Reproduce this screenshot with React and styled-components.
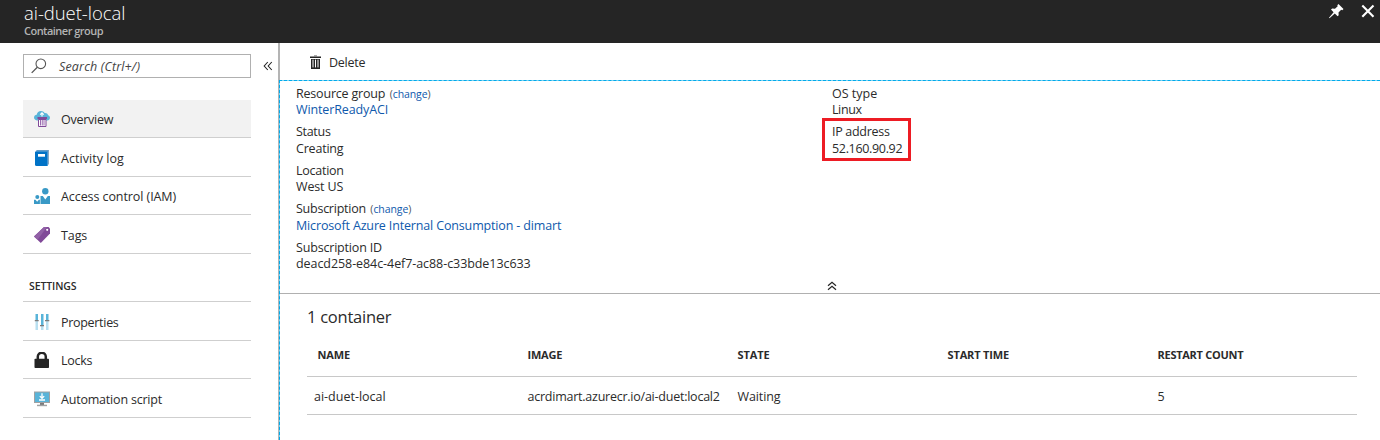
import React from 'react';
import styled, { createGlobalStyle } from 'styled-components';

const GlobalStyle = createGlobalStyle`
  * { box-sizing: border-box; }
  body {
    margin: 0;
    background: #fff;
    color: #2b2b2b;
    font-family: "Open Sans", "Noto Sans", sans-serif;
    font-size: 12.5px;
    overflow: hidden;
  }
`;

const Page = styled.div`
  display: flex;
  flex-direction: column;
  width: 1380px;
  height: 440px;
  overflow: hidden;
`;

const Text = styled.span`
  letter-spacing: ${(p) => p.$ls || 0}px;
  white-space: nowrap;
`;

const Header = styled.header`
  display: flex;
  justify-content: space-between;
  flex: none;
  height: 43px;
  padding: 2px 5px 0 24px;
  background: #252525;
`;

const Title = styled.h1`
  margin: 0;
  font-size: 18.5px;
  line-height: 21px;
  font-weight: 300;
  letter-spacing: -0.05px;
  color: #fff;
`;

const Subtitle = styled.div`
  font-size: 11px;
  line-height: 16px;
  font-weight: 600;
  letter-spacing: -0.52px;
  color: #b4b4b4;
`;

const WindowActions = styled.div`
  display: flex;
  gap: 15px;
  padding-top: 1px;
  svg { display: block; }
`;

const Body = styled.div`
  display: flex;
  flex: 1;
  min-height: 0;
`;

const Sidebar = styled.aside`
  width: 278px;
  flex: none;
  padding: 11px 0 0 23px;
`;

const SearchRow = styled.div`
  display: flex;
  align-items: center;
  gap: 12px;
`;

const SearchBox = styled.div`
  display: flex;
  align-items: center;
  gap: 12px;
  width: 228px;
  height: 24px;
  padding-left: 7px;
  border: 1px solid #b0b0b0;
  font-style: italic;
  color: #444;
`;

const Menu = styled.nav`
  width: 228px;
  margin-top: ${(p) => p.$top}px;
  border-top: ${(p) => (p.$ruled ? '1px solid #cfcfcf' : 'none')};
`;

const MenuItem = styled.a`
  display: flex;
  align-items: center;
  gap: 11px;
  height: 38.5px;
  padding: 3.2px 0 0 11px;
  border-bottom: 1px solid #cfcfcf;
  background: ${(p) => (p.$active ? '#f2f2f2' : 'transparent')};
  svg { flex: none; display: block; }
`;

const MenuHeading = styled.h2`
  margin: 25px 0 0 6px;
  font-size: 10.5px;
  line-height: 15px;
  font-weight: 600;
  letter-spacing: -0.1px;
`;

const Main = styled.main`
  flex: 1;
  min-width: 0;
  display: flex;
  flex-direction: column;
  border-left: 1px solid #b4b4b4;
`;

const Toolbar = styled.div`
  display: flex;
  align-items: center;
  gap: 7px;
  height: 37px;
  flex: none;
  padding: 1px 0 0 29px;
  border-left: 1px solid #b4b4b4;
`;

const Content = styled.div`
  flex: 1;
  border-top: 1px dashed #00abec;
  border-left: 1px dashed #00abec;
  background: linear-gradient(#7fd3f2, #7fd3f2) top / 100% 1px no-repeat border-box,
    linear-gradient(#7fd3f2, #7fd3f2) left / 1px 100% no-repeat border-box;
`;

const Essentials = styled.section`
  display: flex;
  position: relative;
  height: 213px;
  padding: 4.6px 0 0 16px;
  border-bottom: 1px solid #b0b0b0;
`;

const Column = styled.dl`
  width: 536px;
  margin: 0;
`;

const Field = styled.div`
  width: max-content;
  height: 38.5px;
  line-height: 16.7px;
  dt, dd { margin: 0; height: 16.7px; }
`;

const Highlight = styled.div`
  position: absolute;
  left: 542px;
  top: 37px;
  width: 89px;
  height: 43px;
  border: 3px solid #ed1c24;
`;

const Collapse = styled.div`
  position: absolute;
  left: 547px;
  top: 200px;
  svg { display: block; }
`;

const Link = styled.a`
  color: #0f59ac;
  letter-spacing: ${(p) => p.$ls || 0}px;
`;

const Change = styled.span`
  margin-left: 4.5px;
  font-size: 10.5px;
  color: #555;
`;

const TableSection = styled.section`
  padding: 11px 23px 0 27px;
`;

const SectionTitle = styled.h2`
  margin: 0;
  font-size: 16.5px;
  line-height: 24px;
  font-weight: 400;
  letter-spacing: -0.25px;
`;

const Row = styled.div`
  display: grid;
  grid-template-columns: 213.5px 210px 210px 210px 1fr;
  align-items: center;
  height: ${(p) => (p.$head ? 48 : 38)}px;
  padding: ${(p) => (p.$head ? '4px 0 0 7px' : '2px 0 0 7px')};
  border-bottom: 1px solid #c8c8c8;
  font-size: ${(p) => (p.$head ? 11 : 12.5)}px;
  font-weight: ${(p) => (p.$head ? 700 : 400)};
`;

const HeadCell = styled.span`
  padding-left: ${(p) => (p.$first ? 3.5 : 0)}px;
  letter-spacing: ${(p) => p.$ls || 0}px;
`;

const TrashBin = ({ body, lid }) => (
  <g>
    <path d="M5 0h3v1.4H5z" fill={lid} />
    <path d="M1 1.4h11v1.7H1zM2 4h9v10H2z" fill={body} />
    <path d="M4 4.6v7.8M6.5 4.6v7.8M9 4.6v7.8" stroke="#fff" strokeWidth="1" />
  </g>
);

const icons = {
  overview: (
    <>
      <path d="M3.5 9.500C1.5 9.500 0 8.300 0 6.600c0-1.600 1.200-2.700 2.700-2.800C3 1.500 4.800 0 7 0c1.600 0 2.900.7 3.700 2C13 1.900 14 3 14 4.300c1.200.3 2 1.200 2 2.500 0 1.600-1.200 2.700-2.800 2.700z" fill="#59b4d9" />
      <path d="M8 5.500V2M6.200 3.600L8 1.900l1.800 1.700" stroke="#fff" strokeWidth="1.200" fill="none" />
      <path d="M3.500 6h9.500v2H3.500z" fill="#804998" />
      <path d="M4.500 8.500h7.500v7H4.500z" fill="#fff" stroke="#804998" />
      <path d="M6.500 9v5.500M8.250 9v5.500M10 9v5.500" stroke="#9b6bb0" strokeWidth="1" />
    </>
  ),
  log: (
    <>
      <path d="M3 0h12v14.500h-1.300V1.500H1z" fill="#8aa9c4" />
      <path d="M1 2h12.700v14H2.500A1.500 1.500 0 0 1 1 14.500z" fill="#0072c6" />
      <path d="M1 2L3 .5h11.500L13.700 2z" fill="#3c8fcd" />
      <path d="M4 4h7v2.700H4z" fill="#fff" />
    </>
  ),
  people: (
    <>
      <circle cx="11.300" cy="3.300" r="3.200" fill="#3999c6" />
      <path d="M6.500 8h2.300l2.500 3.500L13.800 8H16v8H6.500z" fill="#3999c6" />
      <circle cx="3.300" cy="9" r="2" fill="#3999c6" />
      <path d="M0 11.800h1.500l1.700 2 1.700-2h1v4.200H0z" fill="#3999c6" />
    </>
  ),
  tag: (
    <>
      <path d="M10 0h4.500L16 1.500v5L6.800 16 0 9.500z" fill="#804998" />
      <path d="M10 0h3L3.500 12.800 0 9.500z" fill="#9160a6" />
      <circle cx="13.200" cy="2.800" r="1.100" fill="#fff" />
    </>
  ),
  sliders: (
    <>
      <path d="M1.500 6h2.500v10H1.500zM7 11h2.500v5H7zM12 6h2.500v10H12z" fill="#b8dff0" />
      <path d="M1.500 0h2.500v6H1.500zM7 0h2.500v11H7zM12 0h2.500v6H12z" fill="#59b4d9" />
      <path d="M.8 6.700h3.900M6 11.700h4M11 6.700h4.300" stroke="#7a7a7a" strokeWidth="1.200" />
    </>
  ),
  lock: (
    <>
      <path d="M3.800 8V4.700a4 4 0 0 1 8 0V8" fill="none" stroke="#252525" strokeWidth="2.500" />
      <rect x=".5" y="6.800" width="14.500" height="9.200" rx=".8" fill="#252525" />
    </>
  ),
  monitor: (
    <>
      <path d="M0 .5h16V12H0z" fill="#a0a1a2" />
      <path d="M1 1.500h14V11H1z" fill="#59b4d9" />
      <path d="M6 12h4v2H6z" fill="#7a7a7a" />
      <path d="M3 13.700h10v1.500H3z" fill="#a0a1a2" />
      <path d="M8 2.300V7M5.800 5.100L8 7.300l2.200-2.200M5 9h6" stroke="#fff" strokeWidth="1.300" fill="none" />
    </>
  ),
};

const Icon = ({ name }) => (
  <svg width="16" height="17" viewBox="0 0 16 17">{icons[name]}</svg>
);

const primary = [
  ['overview', 'Overview', -0.25],
  ['log', 'Activity log', 0.05],
  ['people', 'Access control (IAM)', -0.08],
  ['tag', 'Tags', -0.1],
];
const settings = [
  ['sliders', 'Properties', -0.3],
  ['lock', 'Locks', -0.25],
  ['monitor', 'Automation script', -0.2],
];

const MenuItems = ({ items, active }) =>
  items.map(([icon, label, ls]) => (
    <MenuItem key={label} $active={label === active}>
      <Icon name={icon} />
      <Text $ls={ls}>{label}</Text>
    </MenuItem>
  ));

const left = [
  { label: 'Resource group', ls: -0.2, value: 'WinterReadyACI', vls: -0.12, link: true, change: true },
  { label: 'Status', ls: -0.3, value: 'Creating', vls: -0.2 },
  { label: 'Location', ls: -0.25, value: 'West US', vls: -0.15 },
  { label: 'Subscription', ls: -0.25, value: 'Microsoft Azure Internal Consumption - dimart', vls: -0.15, link: true, change: true },
  { label: 'Subscription ID', ls: -0.18, value: 'deacd258-e84c-4ef7-ac88-c33bde13c633', vls: -0.07 },
];
const right = [
  { label: 'OS type', ls: 0, value: 'Linux', vls: -0.4 },
  { label: 'IP address', ls: -0.3, value: '52.160.90.92', vls: -0.33 },
];

const Fields = ({ items }) => (
  <Column>
    {items.map((f) => (
      <Field key={f.label}>
        <dt>
          <Text $ls={f.ls}>{f.label}</Text>
          {f.change && <Change>(<Link $ls={-0.1}>change</Link>)</Change>}
        </dt>
        <dd>{f.link ? <Link $ls={f.vls}>{f.value}</Link> : <Text $ls={f.vls}>{f.value}</Text>}</dd>
      </Field>
    ))}
  </Column>
);

export default function App() {
  return (
    <Page>
      <GlobalStyle />
      <Header>
        <div>
          <Title>ai-duet-local</Title>
          <Subtitle>Container group</Subtitle>
        </div>
        <WindowActions>
          <svg width="17" height="17" viewBox="0 0 17 17">
            <path d="M9.500 1L14.500 6 13.300 7.200 12.200 6.800 9.500 9.500 9.700 12.300 8.600 13.300 5.800 10.400 .5 15.200 0 14.800 4.600 9.200 2 6.500 3.200 5.500 6 5.700 8.700 3.200 8.300 2.200z" fill="#fff" />
          </svg>
          <svg width="14" height="17" viewBox="0 0 14 17">
            <path d="M1.300 2.500l11.200 11.200M12.500 2.500L1.300 13.700" stroke="#fff" strokeWidth="2.100" />
          </svg>
        </WindowActions>
      </Header>
      <Body>
        <Sidebar>
          <SearchRow>
            <SearchBox>
              <svg width="16" height="16" viewBox="0 0 16 16">
                <circle cx="9.800" cy="5.800" r="4.800" fill="none" stroke="#555" strokeWidth="1.100" />
                <path d="M6.300 9.300L.7 14.900" stroke="#555" strokeWidth="1.300" />
              </svg>
              <Text $ls={0.15}>Search (Ctrl+/)</Text>
            </SearchBox>
            <svg width="10" height="10" viewBox="0 0 10 10">
              <path d="M4.800 1L1.200 5l3.600 4M8.800 1L5.200 5l3.600 4" fill="none" stroke="#252525" strokeWidth="1.100" />
            </svg>
          </SearchRow>
          <Menu $top={21.5}>
            <MenuItems items={primary} active="Overview" />
          </Menu>
          <MenuHeading>SETTINGS</MenuHeading>
          <Menu $top={7.5} $ruled>
            <MenuItems items={settings} />
          </Menu>
        </Sidebar>
        <Main>
          <Toolbar>
            <svg width="13" height="15" viewBox="0 0 13 15">
              <TrashBin body="#252525" lid="#aaa" />
            </svg>
            <Text $ls={-0.25}>Delete</Text>
          </Toolbar>
          <Content>
            <Essentials>
              <Fields items={left} />
              <Fields items={right} />
              <Highlight />
              <Collapse>
                <svg width="10" height="10" viewBox="0 0 10 10">
                  <path d="M1 4.800l4-3.600 4 3.600M1 8.800l4-3.600 4 3.600" fill="none" stroke="#252525" strokeWidth="1.200" />
                </svg>
              </Collapse>
            </Essentials>
            <TableSection>
              <SectionTitle>1 container</SectionTitle>
              <Row $head>
                <HeadCell $first $ls={-0.1}>NAME</HeadCell>
                <HeadCell $ls={-0.2}>IMAGE</HeadCell>
                <HeadCell $ls={-0.1}>STATE</HeadCell>
                <HeadCell $ls={-0.15}>START TIME</HeadCell>
                <HeadCell $ls={-0.27}>RESTART COUNT</HeadCell>
              </Row>
              <Row>
                <Text>ai-duet-local</Text>
                <Text $ls={-0.24}>acrdimart.azurecr.io/ai-duet:local2</Text>
                <Text $ls={-0.1}>Waiting</Text>
                <span />
                <Text>5</Text>
              </Row>
            </TableSection>
          </Content>
        </Main>
      </Body>
    </Page>
  );
}
